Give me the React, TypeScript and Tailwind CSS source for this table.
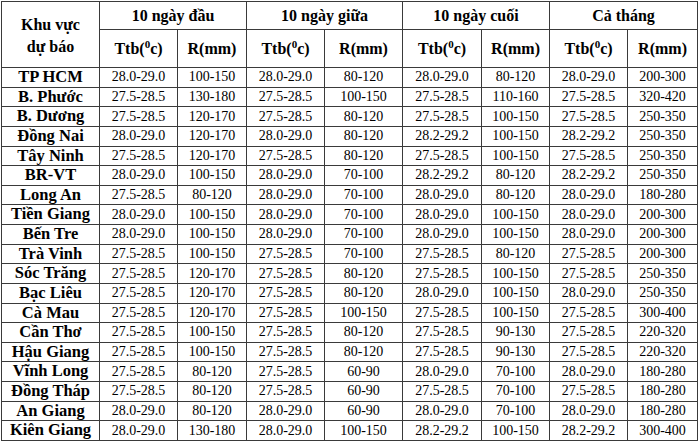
import React from "react";

const rows: [string, string, string, string, string, string, string, string, string][] = [
  ["TP HCM", "28.0-29.0", "100-150", "28.0-29.0", "80-120", "28.0-29.0", "80-120", "28.0-29.0", "200-300"],
  ["B. Phước", "27.5-28.5", "130-180", "27.5-28.5", "100-150", "27.5-28.5", "110-160", "27.5-28.5", "320-420"],
  ["B. Dương", "27.5-28.5", "120-170", "27.5-28.5", "80-120", "27.5-28.5", "100-150", "27.5-28.5", "250-350"],
  ["Đồng Nai", "28.0-29.0", "120-170", "28.0-29.0", "80-120", "28.2-29.2", "100-150", "28.2-29.2", "250-350"],
  ["Tây Ninh", "27.5-28.5", "120-170", "27.5-28.5", "80-120", "27.5-28.5", "100-150", "27.5-28.5", "250-350"],
  ["BR-VT", "28.0-29.0", "100-150", "28.0-29.0", "70-100", "28.2-29.2", "80-120", "28.2-29.2", "250-350"],
  ["Long An", "27.5-28.5", "80-120", "28.0-29.0", "70-100", "28.0-29.0", "80-120", "28.0-29.0", "180-280"],
  ["Tiền Giang", "28.0-29.0", "100-150", "28.0-29.0", "70-100", "28.0-29.0", "100-150", "28.0-29.0", "200-300"],
  ["Bến Tre", "28.0-29.0", "100-150", "28.0-29.0", "70-100", "28.0-29.0", "100-150", "28.0-29.0", "200-300"],
  ["Trà Vinh", "27.5-28.5", "100-150", "27.5-28.5", "70-100", "27.5-28.5", "80-120", "27.5-28.5", "200-300"],
  ["Sóc Trăng", "27.5-28.5", "120-170", "27.5-28.5", "80-120", "27.5-28.5", "100-150", "27.5-28.5", "250-350"],
  ["Bạc Liêu", "27.5-28.5", "120-170", "27.5-28.5", "80-120", "28.0-29.0", "100-150", "28.0-29.0", "250-350"],
  ["Cà Mau", "27.5-28.5", "120-170", "27.5-28.5", "100-150", "27.5-28.5", "100-150", "27.5-28.5", "300-400"],
  ["Cần Thơ", "27.5-28.5", "100-150", "27.5-28.5", "80-120", "27.5-28.5", "90-130", "27.5-28.5", "220-320"],
  ["Hậu Giang", "27.5-28.5", "100-150", "27.5-28.5", "80-120", "27.5-28.5", "90-130", "27.5-28.5", "220-320"],
  ["Vĩnh Long", "27.5-28.5", "80-120", "27.5-28.5", "60-90", "28.0-29.0", "70-100", "28.0-29.0", "180-280"],
  ["Đồng Tháp", "27.5-28.5", "80-120", "27.5-28.5", "60-90", "27.5-28.5", "70-100", "27.5-28.5", "180-280"],
  ["An Giang", "28.0-29.0", "80-120", "28.0-29.0", "60-90", "28.0-29.0", "70-100", "28.0-29.0", "180-280"],
  ["Kiên Giang", "28.0-29.0", "130-180", "28.0-29.0", "100-150", "28.2-29.2", "100-150", "28.2-29.2", "300-400"],
];

const cell = "border border-[#3a3a3a] p-0 text-center align-middle";

function Ttb() {
  return (
    <span>
      Ttb(<sup className="text-[11px]">0</sup>c)
    </span>
  );
}

export default function App() {
  return (
    <div className="w-[698px] h-[443px] bg-white pl-px pt-px" style={{ fontFamily: '"Liberation Serif", "Times New Roman", serif' }}>
      <table className="table-fixed border-collapse w-[696px] text-black">
        <colgroup>
          <col className="w-[98px]" />
          <col className="w-[78px]" />
          <col className="w-[69px]" />
          <col className="w-[78px]" />
          <col className="w-[78px]" />
          <col className="w-[79px]" />
          <col className="w-[68px]" />
          <col className="w-[78px]" />
          <col className="w-[70px]" />
        </colgroup>
        <thead>
          <tr className="h-[28px] text-[16px] font-bold leading-none">
            <th rowSpan={2} className={`${cell} leading-[22px] pt-[3px]`}>
              Khu vực
              <br />
              dự báo
            </th>
            <th colSpan={2} className={cell}>10 ngày đầu</th>
            <th colSpan={2} className={cell}>10 ngày giữa</th>
            <th colSpan={2} className={cell}>10 ngày cuối</th>
            <th colSpan={2} className={cell}>Cả tháng</th>
          </tr>
          <tr className="h-[38px] text-[16px] font-bold leading-none">
            <th className={cell}><Ttb /></th>
            <th className={cell}>R(mm)</th>
            <th className={cell}><Ttb /></th>
            <th className={cell}>R(mm)</th>
            <th className={cell}><Ttb /></th>
            <th className={cell}>R(mm)</th>
            <th className={cell}><Ttb /></th>
            <th className={cell}>R(mm)</th>
          </tr>
        </thead>
        <tbody>
          {rows.map((r) => (
            <tr key={r[0]} className="h-[19.63px] leading-none">
              <td className={`${cell} text-[16.5px] font-bold`}>{r[0]}</td>
              {r.slice(1).map((v, i) => (
                <td key={i} className={`${cell} text-[14px]`}>{v}</td>
              ))}
            </tr>
          ))}
        </tbody>
      </table>
    </div>
  );
}
